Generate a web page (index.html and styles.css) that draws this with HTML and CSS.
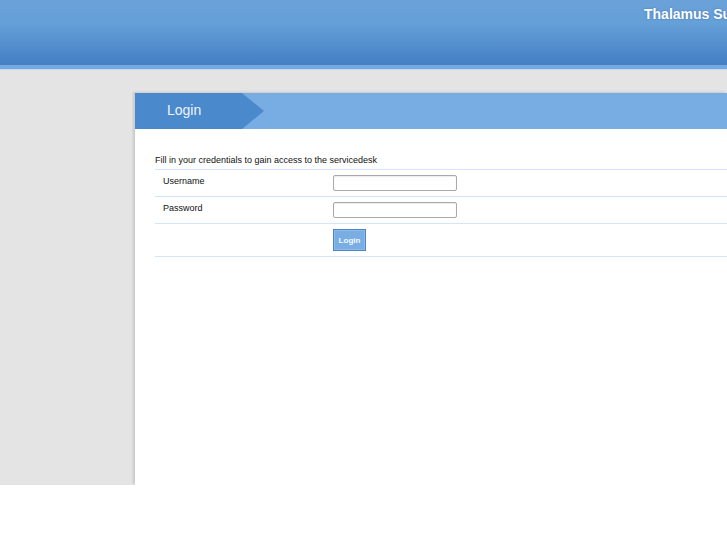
FILE: index.html
```html
<!DOCTYPE html>
<html>
<head>
<meta charset="utf-8">
<link rel="stylesheet" href="styles.css">
</head>
<body>
<header class="top">
  <div class="top-bar">
    <span class="brand">Thalamus Support</span>
  </div>
  <div class="top-strip"></div>
</header>
<main class="stage">
  <section class="panel">
    <div class="panel-head">
      <div class="tab">Login</div>
    </div>
    <div class="panel-body">
      <p class="intro">Fill in your credentials to gain access to the servicedesk</p>
      <div class="form">
        <div class="row">
          <label class="lbl">Username</label>
          <input class="field" type="text">
        </div>
        <div class="row">
          <label class="lbl">Password</label>
          <input class="field" type="password">
        </div>
        <div class="row row-btn">
          <span class="lbl"></span>
          <button class="btn">Login</button>
        </div>
      </div>
    </div>
  </section>
</main>
</body>
</html>
```

FILE: styles.css
```css
html, body {
  margin: 0;
  padding: 0;
  background: #fff;
  font-family: "Liberation Sans", Arial, sans-serif;
  overflow: hidden;
}
.top-bar {
  height: 65px;
  background: linear-gradient(to bottom, #6aa1d9 0%, #66a0d8 35%, #4b86c9 85%, #447fc4 100%);
  display: flex;
  align-items: flex-start;
  padding-left: 644px;
  box-sizing: border-box;
  white-space: nowrap;
  overflow: hidden;
}
.brand {
  margin-top: 6px;
  color: #fff;
  font-weight: bold;
  font-size: 14px;
  text-shadow: 0 0 2px rgba(40, 80, 140, 0.6);
}
.top-strip {
  height: 4px;
  background: #74a8e1;
  border-bottom: 1px solid #c4d8ee;
}
.stage {
  height: 415px;
  background: #e4e4e4;
  padding: 23px 0 0 135px;
  box-sizing: border-box;
  overflow: hidden;
}
.panel {
  height: 100%;
  background: #fff;
  box-shadow: -2px -1px 2px rgba(0, 0, 0, 0.12);
}
.panel-head {
  height: 36px;
  background: #78ade4;
  display: flex;
}
.tab {
  width: 129px;
  height: 36px;
  background: #4a89cc;
  clip-path: polygon(0 0, 107px 0, 129px 18px, 107px 36px, 0 36px);
  color: #eef4fb;
  font-size: 14px;
  line-height: 35px;
  padding-left: 32px;
  box-sizing: border-box;
}
.panel-body {
  padding: 22px 0 0 20px;
}
.intro {
  margin: 0;
  font-size: 9px;
  line-height: 18px;
  color: #111;
}
.form {
  border-top: 1px solid #d3e5f8;
}
.row {
  display: flex;
  align-items: center;
  height: 26px;
  border-bottom: 1px solid #d3e5f8;
}
.row-btn {
  height: 32px;
}
.lbl {
  width: 170px;
  padding-left: 8px;
  font-size: 9px;
  color: #111;
  position: relative;
  top: -2px;
}
.field {
  width: 124px;
  height: 16px;
  box-sizing: border-box;
  border: 1px solid #a9a9a9;
  border-radius: 2px;
  box-shadow: inset 0 1px 1px rgba(0,0,0,0.08);
  margin: 0;
  padding: 0;
  background: #fff;
}
.btn {
  width: 33px;
  height: 22px;
  margin: 0;
  padding: 0;
  background: #79aee5;
  border: 1px solid #4d86c4;
  box-shadow: inset 0 0 0 1px #8dbbea;
  color: #f4f8fd;
  font-family: "Liberation Sans", Arial, sans-serif;
  font-weight: bold;
  font-size: 8px;
}
```
